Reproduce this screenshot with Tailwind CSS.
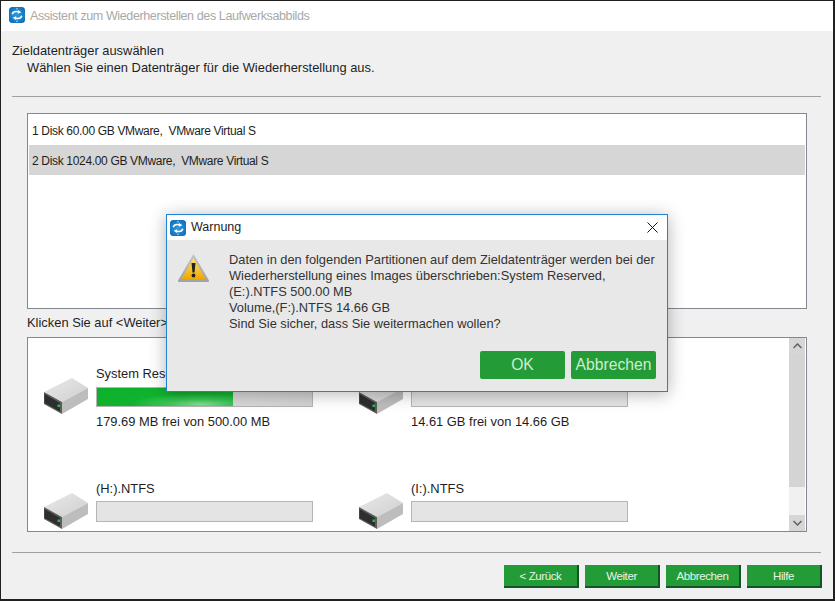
<!doctype html>
<html><head><meta charset="utf-8"><script src="https://cdn.jsdelivr.net/npm/@tailwindcss/browser@4"></script></head>
<body class="m-0 bg-[#202020]">
<svg width="0" height="0" class="absolute">
<defs>
<radialGradient id="lg" cx="0.5" cy="0.5" r="0.7"><stop offset="0" stop-color="#2a9be0"/><stop offset="0.7" stop-color="#1478c4"/><stop offset="1" stop-color="#0a4f92"/></radialGradient>
<linearGradient id="warn" x1="0" y1="0" x2="0" y2="1"><stop offset="0" stop-color="#ffe36a"/><stop offset="1" stop-color="#f0a800"/></linearGradient>
<linearGradient id="bevel" x1="0" y1="0" x2="0" y2="1"><stop offset="0" stop-color="#c4c4c4"/><stop offset="1" stop-color="#a2a2a2"/></linearGradient>
<linearGradient id="dtop" x1="0" y1="0" x2="1" y2="1"><stop offset="0" stop-color="#e9e9e9"/><stop offset="1" stop-color="#cfcfcf"/></linearGradient>
<symbol id="logo" viewBox="0 0 16 16">
<rect x="0" y="0" width="16" height="16" rx="3.500" fill="url(#lg)"/>
<path d="M3.200 7.200C3.800 5.200 6.200 4 9.600 4.800" fill="none" stroke="#fff" stroke-width="1.500"/>
<path d="M9 2.900l3.400 2.300-3.600 1.500z" fill="#fff"/>
<path d="M12.800 8.800C12.200 10.800 9.800 12 6.400 11.200" fill="none" stroke="#fff" stroke-width="1.500"/>
<path d="M7 13.100l-3.400-2.300 3.600-1.500z" fill="#fff"/>
<circle cx="8" cy="1.800" r=".7" fill="#cfe8fa"/><circle cx="8" cy="14.200" r=".7" fill="#cfe8fa"/>
</symbol>
<symbol id="drive" viewBox="0 0 44 36">
<path d="M0 14L28 0l16 10L18 24z" fill="url(#dtop)"/>
<path d="M18 24L44 10v11L18 36z" fill="#bdbdbd"/>
<path d="M0 14l18 10v12L0 26z" fill="#5c5c5c"/>
<path d="M.5 16l15.500 9v8.500L.5 25z" fill="#2e2e2e"/>
<rect x="13.500" y="26.500" width="2.500" height="2.500" fill="#1ec04a"/>
</symbol>
</defs>
</svg>
<div class="w-[835px] h-[601px] overflow-hidden relative pt-px pb-[2px] pl-px pr-[2px] font-['Liberation_Sans',Arial,sans-serif] text-[12.900px] text-[#1e1e1e]">
 <div class="h-[598px] flex flex-col bg-[#f0f0f0]">
  <div class="h-[30px] bg-white flex items-center pl-[8px] gap-[5px] shrink-0">
   <svg class="w-4 h-4 mb-[2px]"><use href="#logo"/></svg>
   <span class="text-[#a8a8a8] text-[12.500px] tracking-[-0.38px]">Assistent zum Wiederherstellen des Laufwerksabbilds</span>
  </div>
  <div class="flex flex-col px-[11px] flex-1">
   <p class="mt-[12px] leading-[15px]">Zieldatenträger auswählen</p>
   <p class="ml-[15px] mt-[2px] leading-[15px]">Wählen Sie einen Datenträger für die Wiederherstellung aus.</p>
   <div class="mt-[21px] h-px bg-[#a0a0a0] w-[809px]"></div>
   <div class="ml-[15px] mt-[16px] w-[780px] h-[196px] border border-[#828790] bg-white p-px flex flex-col text-[12px] tracking-[-0.33px]">
    <div class="h-[30px] pl-[3px] pt-[2px] flex items-center">1 Disk 60.00 GB VMware,&nbsp; VMware Virtual S</div>
    <div class="h-[30px] pl-[3px] pt-[2px] flex items-center bg-[#d6d6d6]">2 Disk 1024.00 GB VMware,&nbsp; VMware Virtual S</div>
   </div>
   <p class="ml-[15px] mt-[6px] leading-[15px]">Klicken Sie auf &lt;Weiter&gt;</p>
   <div class="ml-[15px] mt-[7px] w-[780px] h-[195px] border border-[#828790] bg-white flex">
    <div class="flex-1 grid grid-cols-[315px_1fr] grid-rows-[115px_1fr] pt-[27px] pl-[16px]">
     <div class="flex">
      <svg class="w-[44px] h-[36px] mt-[13px] shrink-0"><use href="#drive"/></svg>
      <div class="ml-[8px] w-[217px]">
       <p class="leading-[18px]">System Reserved</p>
       <div class="mt-[4px] h-[20px] border border-[#b5b5b5] bg-[linear-gradient(90deg,#e6e6e6,#d2d2d2)] flex"><div class="w-[136px] bg-[radial-gradient(ellipse_at_76%_90%,#7fe08f_0%,#3cc657_22%,#10b32d_48%,#0eb02b_100%)]"></div></div>
       <p class="mt-[7px] leading-[16px]">179.69 MB frei von 500.00 MB</p>
      </div>
     </div>
     <div class="flex">
      <svg class="w-[44px] h-[36px] mt-[13px] shrink-0"><use href="#drive"/></svg>
      <div class="ml-[8px] w-[217px]">
       <p class="leading-[18px]">Volume,(F:).NTFS</p>
       <div class="mt-[4px] h-[20px] border border-[#b5b5b5] bg-[#e4e4e4]"></div>
       <p class="mt-[7px] leading-[16px]">14.61 GB frei von 14.66 GB</p>
      </div>
     </div>
     <div class="flex">
      <svg class="w-[44px] h-[36px] mt-[13px] shrink-0"><use href="#drive"/></svg>
      <div class="ml-[8px] w-[217px]">
       <p class="leading-[18px]">(H:).NTFS</p>
       <div class="mt-[3px] h-[21px] border border-[#b5b5b5] bg-[#e4e4e4]"></div>
      </div>
     </div>
     <div class="flex">
      <svg class="w-[44px] h-[36px] mt-[13px] shrink-0"><use href="#drive"/></svg>
      <div class="ml-[8px] w-[217px]">
       <p class="leading-[18px]">(I:).NTFS</p>
       <div class="mt-[3px] h-[21px] border border-[#b5b5b5] bg-[#e4e4e4]"></div>
      </div>
     </div>
    </div>
    <div class="w-[16px] mr-px bg-[#f0f0f0] flex flex-col shrink-0">
     <div class="h-[16px] bg-[#d6d6d6] flex items-center justify-center"><svg width="9" height="6" viewBox="0 0 9 6"><path d="M.5 5L4.500 1l4 4" fill="none" stroke="#606060" stroke-width="1.500"/></svg></div>
     <div class="h-[133px] bg-[#d4d4d4]"></div>
     <div class="flex-1"></div>
     <div class="h-[16px] bg-[#d6d6d6] flex items-center justify-center"><svg width="9" height="6" viewBox="0 0 9 6"><path d="M.5 1l4 4 4-4" fill="none" stroke="#606060" stroke-width="1.500"/></svg></div>
    </div>
   </div>
   <div class="mt-[20px] h-px bg-[#a0a0a0] w-[809px]"></div>
   <div class="mt-[12px] flex justify-end gap-[6px] w-[810px] text-[11.500px] tracking-[-0.4px] text-[#e8f4e8]">
    <button class="w-[75px] h-[23px] pt-[3px] bg-[#239b37] border-r-2 border-b-2 border-[#14522a]">&lt; Zurück</button>
    <button class="w-[75px] h-[23px] pt-[3px] bg-[#239b37] border-r-2 border-b-2 border-[#14522a]">Weiter</button>
    <button class="w-[75px] h-[23px] pt-[3px] bg-[#239b37] border-r-2 border-b-2 border-[#14522a]">Abbrechen</button>
    <button class="w-[75px] h-[23px] pt-[3px] bg-[#239b37] border-r-2 border-b-2 border-[#14522a]">Hilfe</button>
   </div>
  </div>
 </div>
 <div class="absolute left-[166px] top-[214px] w-[502px] h-[178px] border border-[#1f83d4] bg-[#e8e8e8] shadow-[0_2px_16px_rgba(0,0,0,0.3)] flex flex-col">
  <div class="h-[25px] bg-white flex items-center pl-[3px] gap-[5px] shrink-0">
   <svg class="w-4 h-4"><use href="#logo"/></svg>
   <span class="text-[12.500px]">Warnung</span>
   <svg class="ml-auto mr-[9px]" width="11" height="11" viewBox="0 0 11 11"><path d="M.5.5l10 10M10.500.5l-10 10" stroke="#111" stroke-width="1" fill="none"/></svg>
  </div>
  <div class="flex pl-[11px] pt-[12px]">
   <svg width="31" height="28" viewBox="0 0 31 28" class="shrink-0 mt-[2px]">
    <path d="M15.500 0L31 26.500q.2 1.500-1 1.500H1q-1.200 0-1-1.500z" fill="url(#bevel)"/>
    <path d="M15.500 4L27.500 25H3.500z" fill="url(#warn)"/>
    <path d="M13.500 9h4l-1 9.500h-2z" fill="#222"/><circle cx="15.500" cy="21.500" r="1.900" fill="#222"/>
   </svg>
   <div class="ml-[20px] text-[#333] leading-[16px] text-[12.830px]">
    <p>Daten in den folgenden Partitionen auf dem Zieldatenträger werden bei der</p>
    <p>Wiederherstellung eines Images überschrieben:System Reserved,</p>
    <p>(E:).NTFS 500.00 MB</p>
    <p>Volume,(F:).NTFS 14.66 GB</p>
    <p>Sind Sie sicher, dass Sie weitermachen wollen?</p>
   </div>
  </div>
  <div class="flex justify-end gap-[6px] pr-[11px] mt-[19px] text-[15.700px] text-[#cfeccf]">
   <button class="w-[85px] h-[28px] rounded-[2px] bg-[#239b37]">OK</button>
   <button class="w-[85px] h-[28px] rounded-[2px] bg-[#239b37]">Abbrechen</button>
  </div>
 </div>
</div>
</body></html>
